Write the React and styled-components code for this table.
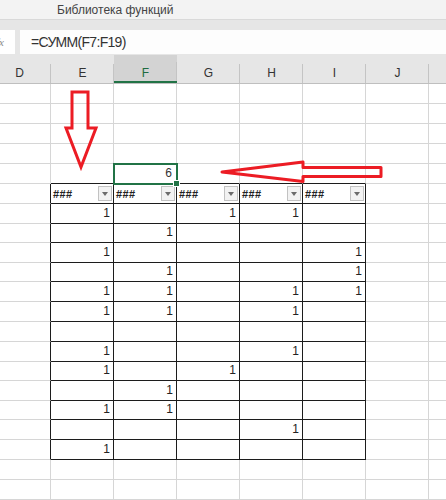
import React from 'react';
import styled, { createGlobalStyle } from 'styled-components';

const GlobalStyle = createGlobalStyle`
  body {
    margin: 0;
    background: #ffffff;
    font-family: 'Liberation Sans', Arial, sans-serif;
  }
`;

const COLS = ['D', 'E', 'F', 'G', 'H', 'I', 'J', 'K'];
const TABLE_COLS = ['E', 'F', 'G', 'H', 'I'];
const ROW_HEIGHTS = [20, 20, 20, 20, 20, 20, 20, 19, 20, 19, 20, 20, 20, 20, 19, 20, 19, 20, 20, 20, 20];

const values = {
  7: 'E G H',
  8: 'F',
  9: 'E I',
  10: 'F I',
  11: 'E F H I',
  12: 'E F H',
  13: '',
  14: 'E H',
  15: 'E G',
  16: 'F',
  17: 'E F',
  18: 'H',
  19: 'E',
};

const GRID = '#d6d6d6';
const INK = '#1c1c1c';

const inTable = (r, c) => r >= 6 && r <= 19 && TABLE_COLS.includes(c);

const App = () => {
  return (
    <Screen>
      <GlobalStyle />
      <Ribbon>
        <GroupLabel>Библиотека функций</GroupLabel>
      </Ribbon>
      <FormulaBand>
        <NameBox>
          <Fx>fx</Fx>
        </NameBox>
        <FormulaInput>=СУММ(F7:F19)</FormulaInput>
      </FormulaBand>
      <Sheet>
        <HeaderRow>
          {COLS.map((c) => (
            <ColHeader key={c} $active={c === 'F'}>
              {c === 'K' ? '' : c}
            </ColHeader>
          ))}
        </HeaderRow>
        {ROW_HEIGHTS.map((h, i) => {
          const r = i + 1;
          const filled = (values[r] || '').split(' ');
          return (
            <Row key={r} $h={h}>
              {COLS.map((c) => {
                const right = inTable(r, c) || (c === 'D' && r >= 6 && r <= 19) ? INK : GRID;
                const bottom = inTable(r, c) || (r === 5 && TABLE_COLS.includes(c)) ? INK : GRID;
                if (r === 6 && TABLE_COLS.includes(c)) {
                  return (
                    <Cell key={c} $right={right} $bottom={bottom}>
                      <FilterHead>
                        <Hashes>###</Hashes>
                        <DropButton>
                          <Caret />
                        </DropButton>
                      </FilterHead>
                    </Cell>
                  );
                }
                if (r === 5 && c === 'F') {
                  return (
                    <SelectedCell key={c} $right={right} $bottom={bottom}>
                      6
                    </SelectedCell>
                  );
                }
                return (
                  <Cell key={c} $right={right} $bottom={bottom}>
                    {r >= 7 && r <= 19 && filled.includes(c) ? '1' : ''}
                  </Cell>
                );
              })}
            </Row>
          );
        })}
      </Sheet>
      <Marks width="446" height="500" viewBox="0 0 446 500">
        <path
          d="M72 92 L88 92 L88 128 L96 128 L81 167 L66 128 L72 128 Z"
          fill="none"
          stroke="#ec1c24"
          strokeWidth="3"
          strokeLinejoin="miter"
        />
        <path
          d="M222 172 L303 162 L303 167.5 L381 167.5 L381 176.5 L303 176.5 L303 181.5 Z"
          fill="none"
          stroke="#ec1c24"
          strokeWidth="3"
          strokeLinejoin="round"
        />
      </Marks>
    </Screen>
  );
};

export default App;

const Screen = styled.div`
  position: relative;
  width: 446px;
  height: 500px;
  overflow: hidden;
  background: #ffffff;
`;

const Ribbon = styled.div`
  height: 19px;
  border-bottom: 1px solid #d9d9d9;
  background: #f3f3f3;
  display: flex;
  align-items: center;
  padding-left: 57px;
`;

const GroupLabel = styled.span`
  font-size: 12px;
  color: #444444;
`;

const FormulaBand = styled.div`
  height: 35px;
  box-sizing: border-box;
  background: #e6e6e6;
  padding: 10px 0 1px;
  display: flex;
  gap: 5px;
`;

const NameBox = styled.div`
  width: 15px;
  background: #ffffff;
  overflow: hidden;
  display: flex;
  align-items: center;
  justify-content: flex-end;
`;

const Fx = styled.span`
  font-family: 'Liberation Serif', serif;
  font-style: italic;
  font-size: 11px;
  color: #8a8a8a;
  margin-right: 11px;
`;

const FormulaInput = styled.div`
  flex: 1;
  background: #fdfdfd;
  display: flex;
  align-items: center;
  padding-left: 11px;
  font-size: 14px;
  letter-spacing: -0.7px;
  color: #333333;
`;

const Sheet = styled.div`
  margin-left: -12px;
  display: flex;
  flex-direction: column;
`;

const HeaderRow = styled.div`
  display: flex;
  height: 29px;
  box-sizing: border-box;
  border-bottom: 1px solid #bfbfbf;
  background: #e6e6e6;
`;

const ColHeader = styled.div`
  flex: 0 0 63px;
  box-sizing: border-box;
  display: flex;
  align-items: flex-end;
  justify-content: center;
  padding-bottom: ${(p) => (p.$active ? '1px' : '3px')};
  font-size: 12px;
  color: ${(p) => (p.$active ? '#1e6b41' : '#333333')};
  background-color: ${(p) => (p.$active ? '#d3d3d3' : 'transparent')};
  background-image: linear-gradient(#c4c4c4, #c4c4c4);
  background-size: 1px 19px;
  background-position: right bottom;
  background-repeat: no-repeat;
  border-bottom: ${(p) => (p.$active ? '2px solid #217346' : 'none')};
`;

const Row = styled.div`
  display: flex;
  height: ${(p) => p.$h}px;
`;

const Cell = styled.div`
  flex: 0 0 63px;
  box-sizing: border-box;
  border-right: 1px solid ${(p) => p.$right};
  border-bottom: 1px solid ${(p) => p.$bottom};
  display: flex;
  align-items: flex-end;
  justify-content: flex-end;
  padding: 0 3px 3px 0;
  font-size: 12px;
  color: #222222;
`;

const SelectedCell = styled(Cell)`
  position: relative;
  z-index: 1;
  outline: 2px solid #217346;
  outline-offset: -1px;
  padding-right: 4px;
  color: #333333;

  &::after {
    content: '';
    position: absolute;
    right: -4px;
    bottom: -4px;
    width: 5px;
    height: 5px;
    background: #217346;
    border: 1px solid #ffffff;
  }
`;

const FilterHead = styled.div`
  flex: 1;
  align-self: stretch;
  display: flex;
  align-items: center;
  justify-content: space-between;
  margin: 0 -2px -3px 2px;
`;

const Hashes = styled.span`
  font-size: 11px;
  font-weight: bold;
  letter-spacing: 0.4px;
  color: #222222;
`;

const DropButton = styled.div`
  width: 14px;
  height: 15px;
  box-sizing: border-box;
  background: #f2f2f2;
  border: 1px solid #c2c2c2;
  display: flex;
  align-items: center;
  justify-content: center;
`;

const Caret = styled.div`
  width: 0;
  height: 0;
  border-left: 3px solid transparent;
  border-right: 3px solid transparent;
  border-top: 4px solid #6b6b6b;
`;

const Marks = styled.svg`
  position: absolute;
  left: 0;
  top: 0;
  pointer-events: none;
`;
